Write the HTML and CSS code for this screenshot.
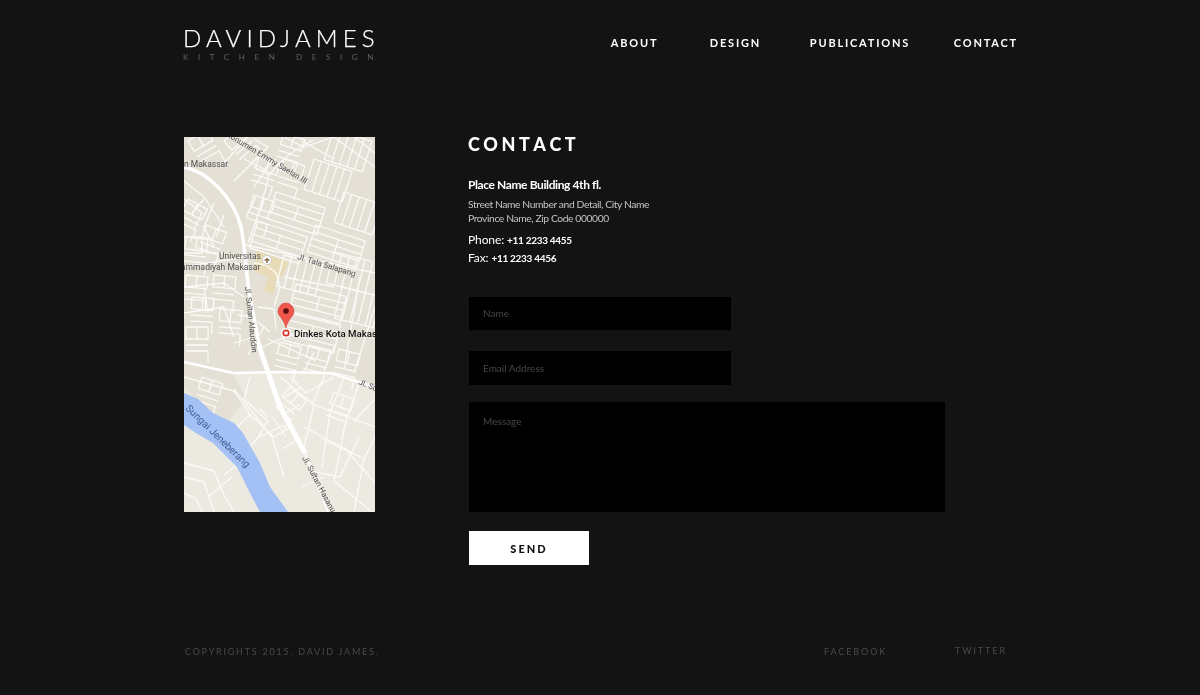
FILE: index.html
```html
<!DOCTYPE html>
<html lang="en">
<head>
<meta charset="utf-8">
<title>David James Kitchen Design</title>
<link rel="stylesheet" href="styles.css">
</head>
<body>
<div class="page">
  <header class="header">
    <a class="logo" href="#">
      <span class="logo-name">DAVIDJAMES</span>
      <span class="logo-tag">KITCHEN DESIGN</span>
    </a>
    <nav class="nav">
      <a href="#">ABOUT</a>
      <a href="#">DESIGN</a>
      <a href="#">PUBLICATIONS</a>
      <a href="#">CONTACT</a>
    </nav>
  </header>
  <main class="main">
    <div class="map">
      <svg class="map-svg" viewBox="0 0 191 375" width="191" height="375" aria-label="Map">
        <defs>
          <path id="rows" d="M0 0H52M0 7H52M0 14H52M0 21H52M0 28H52M0 0V28M52 0V28M26 7V21"/>
          <path id="cols" d="M0 0V32M8 0V32M16 0V32M24 0V32M32 0V32M40 0V32M0 0H40M0 32H40"/>
          <path id="cells" d="M0 0H22V12H0ZM11 0V12M0 18H22M0 24H22V36"/>
        </defs>
        <rect width="191" height="375" fill="#ece9e1"/>
        <path class="block" d="M0 0H191V248L146 236L96 235L49 236L0 225Z"/>
        <path class="block" d="M0 225L49 236L62 262L40 290L0 250Z"/>
        <path class="campus" d="M72 113L105 125L100 136L92 144L90 158L80 154L84 140L70 134Z"/>
        <g class="st">
          <use href="#rows" transform="translate(92 55) rotate(18)"/>
          <use href="#rows" transform="translate(132 88) rotate(18)"/>
          <use href="#rows" transform="translate(74 84) rotate(18)"/>
          <use href="#cols" transform="translate(130 22) rotate(18)"/>
          <use href="#cols" transform="translate(160 55) rotate(18)"/>
          <use href="#cols" transform="translate(150 -8) rotate(18)"/>
          <use href="#rows" transform="translate(112 147) rotate(14)"/>
          <use href="#rows" transform="translate(106 176) rotate(14)"/>
          <use href="#cols" transform="translate(158 150) rotate(14)"/>
          <use href="#cols" transform="translate(100 118) rotate(14)"/>
          <use href="#cols" transform="translate(150 115) rotate(14)"/>
          <use href="#cells" transform="translate(75 20) rotate(18)"/>
          <use href="#cells" transform="translate(100 22) rotate(18)"/>
          <use href="#cells" transform="translate(70 58) rotate(18)"/>
          <use href="#cells" transform="translate(100 -4) rotate(18)"/>
          <use href="#cells" transform="translate(4 62) rotate(28)"/>
          <use href="#cells" transform="translate(22 88) rotate(20)"/>
          <use href="#cells" transform="translate(2 100) rotate(6)"/>
          <use href="#cells" transform="translate(2 138) rotate(5)"/>
          <use href="#cells" transform="translate(30 138) rotate(5)"/>
          <use href="#cells" transform="translate(8 160) rotate(4)"/>
          <use href="#cells" transform="translate(36 172) rotate(4)"/>
          <use href="#cells" transform="translate(2 190) rotate(0)"/>
          <use href="#cells" transform="translate(40 4) rotate(-40)"/>
          <use href="#cells" transform="translate(4 4) rotate(-30)"/>
          <use href="#cells" transform="translate(96 205) rotate(14)"/>
          <use href="#cells" transform="translate(125 208) rotate(14)"/>
          <use href="#cells" transform="translate(155 212) rotate(14)"/>
          <use href="#cells" transform="translate(18 240) rotate(18)"/>
          <use href="#cells" transform="translate(106 250) rotate(40)"/>
          <use href="#cells" transform="translate(150 255) rotate(20)"/>
          <path d="M62 108L191 136M64 106C72 85 80 60 85 38C95 25 110 12 129 3M85 38L70 30M60 22L80 32L92 22M50 44L84 10L70 2M40 26L64 0M100 0L120 10L150 0M150 0L191 30M170 0L191 16M118 4L150 22M72 60L62 80M85 28L70 50"/>
          <path d="M0 44L20 60L40 90M0 62L18 76L10 92M20 62L8 76M30 66L20 90L30 110M40 78L32 100M0 100H18V116H0M22 116H40M0 130L60 120M0 150L40 146L60 160M0 176L40 170L50 200M20 150L24 176M50 126L66 130M50 206L70 200M54 178L70 180"/>
          <path d="M70 126L82 128L92 136L96 150L90 170M100 140L150 150M176 140L160 232M74 170L90 172L92 192M74 185L86 195M78 210L110 196L130 200M80 190L64 218M84 202L132 224M130 215L120 234M150 210L140 234M191 170L170 236"/>
          <path d="M0 240L50 254L66 278L42 300L16 280M66 240L60 262M60 262L84 284L70 306M76 300L100 288M84 280L76 272"/>
          <path d="M50 252L88 300L100 340M64 276L90 300L110 288M78 296L66 310M88 280L102 300M98 312L118 300"/>
          <path d="M96 240L130 268L120 310M106 240L122 256L150 240M130 268L191 290M140 240L128 268M160 240L146 276L138 330M176 244L162 284L150 344M191 262L170 284M100 260L118 250M116 268L102 276M120 290L180 322L191 300M138 302L180 322L170 375M160 310L191 346M126 334L156 340L175 300M150 344L188 375M118 350L140 340"/>
          <path d="M0 326L30 334L40 358L50 375M0 340L20 345L30 375M0 356L12 362L18 375M40 338L60 322M24 360L48 340"/>
        </g>
        <path class="river" d="M0 256L14 262L29 276L50 286L59 296L68 312L76 326L86 350L104 375H76L68 360L53 330L29 306L12 296L0 288Z"/>
        <path class="road" d="M0 30C25 35 50 62 57 90C62 115 62 140 66 160L76 212"/>
        <path class="road thick" d="M74 206L96 270L121 316"/>
        <path class="road thin" d="M121 316L144 375"/>
        <path class="road mid" d="M0 225L49 236L96 235L146 236L191 250"/>
        <g class="lbl">
          <text x="0" y="30">n Makassar</text>
          <text class="sm" x="40" y="-2" transform="rotate(31 40 -2)">Monumen Emmy Saelan III</text>
          <text x="35" y="122">Universitas</text>
          <text x="-3" y="133">ammadiyah Makasar</text>
          <text class="sm" x="113" y="122" transform="rotate(17 113 122)">Jl. Tala Salapang</text>
          <text class="sm" x="61" y="150" transform="rotate(84 61 150)">Jl. Sultan Alauddin</text>
          <text class="sm" x="174" y="247" transform="rotate(22 174 247)">Jl. Sultan</text>
          <text class="river-text" x="1" y="272" transform="rotate(44 1 272)">Sungai Jeneberang</text>
          <text class="sm" x="118" y="321" transform="rotate(62 118 321)">Jl. Sultan Hasanuddin</text>
        </g>
        <circle cx="83" cy="123" r="4.5" fill="#fff" stroke="#bbb" stroke-width=".6"/>
        <path d="M80.500 123h5M83 121v5" stroke="#8a6b4a" stroke-width="1.6"/>
        <circle cx="102" cy="196" r="5" fill="#fff"/>
        <circle cx="102" cy="196" r="3.6" fill="#d9332c"/>
        <rect x="100.300" y="194.500" width="3.4" height="3" fill="#fff"/>
        <path d="M102 191C100 182 94 179 94 174.500A8 8.500 0 0 1 110 174.500C110 179 104 182 102 191Z" fill="#f0574c" stroke="#c9362c" stroke-width=".5"/>
        <circle cx="102" cy="174" r="2.800" fill="#5a0f0c"/>
        <text class="pin" x="110" y="199.500">Dinkes Kota Makassar</text>
      </svg>
    </div>
    <section class="contact">
      <h1 class="title">CONTACT</h1>
      <p class="place">Place Name Building 4th fl.</p>
      <p class="address">Street Name Number and Detail, City Name<br>Province Name, Zip Code 000000</p>
      <p class="phone">Phone: <b>+11 2233 4455</b></p>
      <p class="phone">Fax: <b>+11 2233 4456</b></p>
      <form class="form">
        <input class="field field-name" type="text" placeholder="Name">
        <input class="field field-email" type="text" placeholder="Email Address">
        <textarea class="field field-msg" placeholder="Message"></textarea>
        <button class="send" type="button">SEND</button>
      </form>
    </section>
  </main>
  <footer class="footer">
    <span class="copy">COPYRIGHTS 2015. DAVID JAMES.</span>
    <a class="fb" href="#">FACEBOOK</a>
    <a class="tw" href="#">TWITTER</a>
  </footer>
</div>
</body>
</html>
```
FILE: styles.css
```css
* { box-sizing: border-box; }
html, body { margin: 0; height: 100%; }
body {
  background: #131313;
  color: #fff;
  font-family: Lato, "Open Sans", sans-serif;
  overflow: hidden;
}
a { color: inherit; text-decoration: none; }
.page { width: 1200px; height: 695px; padding: 0 0 0 183px; will-change: transform; }

.header { display: flex; justify-content: space-between; height: 137px; padding: 27px 182px 0 0; }
.logo { display: flex; flex-direction: column; width: 200px; }
.logo-name { font-size: 24px; font-weight: 300; letter-spacing: 5.100px; line-height: 22px; white-space: nowrap; -webkit-text-stroke: .25px #fff; }
.logo-tag { font-size: 8px; letter-spacing: 9.600px; line-height: 17px; color: #606060; white-space: nowrap; }
.nav { display: grid; grid-template-columns: 99px 100px 144px auto; margin-top: 9px; font-size: 11px; font-weight: 700; letter-spacing: 1.800px; line-height: 14px; height: 14px; }

.main { display: flex; }
.map { width: 191px; height: 375px; margin-left: 1px; overflow: hidden; }
.map-svg { display: block; }
.block { fill: #e4e0d6; }
.campus { fill: #e8dcb8; }
.river { fill: #a3c1f5; }
.st path, .st use { fill: none; stroke: #fbfaf7; stroke-width: 1.300; stroke-linejoin: round; }
.road { fill: none; stroke: #fff; stroke-width: 3.500; }
.thick { stroke-width: 5; }
.thin { stroke-width: 1.500; }
.mid { stroke-width: 2.500; }
.lbl text { font-family: Roboto, sans-serif; font-size: 8.500px; fill: #505050; }
.lbl .sm { font-size: 8px; }
.lbl .river-text { fill: #3e5c94; font-size: 10px; }
.pin { font-family: Roboto, sans-serif; font-size: 9.700px; font-weight: 500; fill: #111; }

.contact { margin-left: 93px; display: flex; flex-direction: column; }
.title { margin: 0; font-size: 18px; font-weight: 900; letter-spacing: 3.500px; line-height: 14px; font-kerning: none; }
.place { margin: 27px 0 0; font-size: 12px; font-weight: 700; letter-spacing: -.4px; line-height: 14px; }
.address { margin: 5px 0 0; font-size: 10.300px; letter-spacing: -.4px; line-height: 14px; color: #c4c4c4; }
.phone { margin: 8px 0 0; font-size: 12px; font-weight: 400; line-height: 14px; letter-spacing: -.1px; }
.phone b { font-size: 10px; font-weight: 700; letter-spacing: -.3px; }
.phone + .phone { margin-top: 4px; }
.form { display: flex; flex-direction: column; align-items: flex-start; margin-top: 32px; margin-left: 1px; }
.field {
  display: block;
  border: 0;
  border-radius: 0;
  outline: 0;
  background: #000;
  color: #fff;
  font-family: Lato, sans-serif;
  font-size: 10px;
  padding: 0 14px;
  resize: none;
}
.field::placeholder { color: #464646; opacity: 1; }
.field-name { width: 262px; height: 33px; padding-bottom: 1px; }
.field-email { width: 262px; height: 34px; margin-top: 21px; }
.field-msg { width: 476px; height: 110px; margin-top: 17px; padding-top: 13px; }
.send {
  width: 120px; height: 34px; margin-top: 19px;
  border: 0; background: #fff; color: #111;
  font-family: Lato, sans-serif; font-size: 11px; font-weight: 900; letter-spacing: 2px;
}

.footer { display: flex; padding-top: 81px; font-size: 9px; letter-spacing: 1.900px; color: #4a4a4a; line-height: 12px; }
.copy { margin-left: 2px; width: 639px; letter-spacing: 1.760px; }
.fb { width: 131px; }
.tw { margin-top: -1px; }
```
